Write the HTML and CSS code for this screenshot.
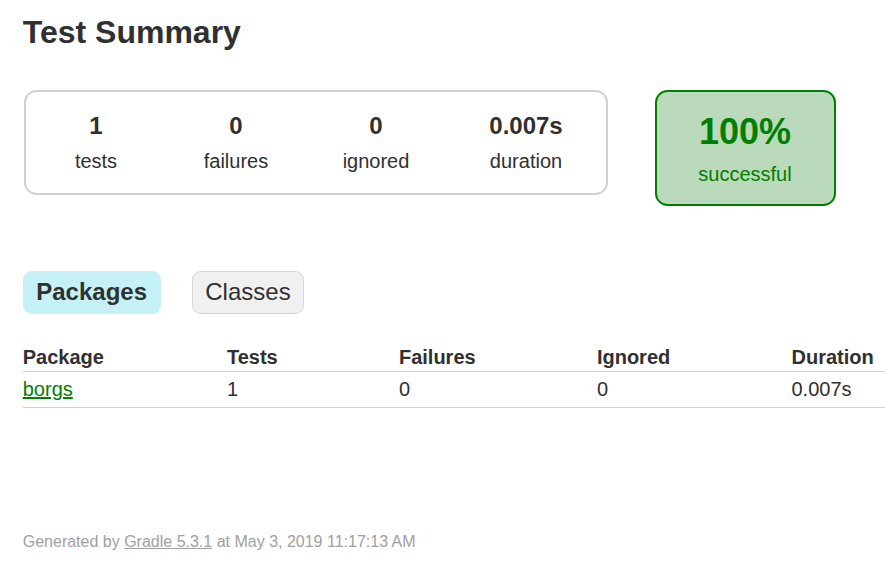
FILE: index.html
```html
<!DOCTYPE html>
<html>
<head>
<meta charset="utf-8">
<title>Test results - Test Summary</title>
<link rel="stylesheet" href="styles.css">
</head>
<body>
<div class="content">
  <h1 class="title">Test Summary</h1>
  <div class="summary">
    <div class="summary-group">
      <div class="info-box">
        <div class="counter">1</div>
        <p class="label">tests</p>
      </div>
      <div class="info-box">
        <div class="counter">0</div>
        <p class="label">failures</p>
      </div>
      <div class="info-box">
        <div class="counter">0</div>
        <p class="label">ignored</p>
      </div>
      <div class="info-box info-box-duration">
        <div class="counter">0.007s</div>
        <p class="label">duration</p>
      </div>
    </div>
    <div class="success-rate">
      <div class="percent">100%</div>
      <p class="label">successful</p>
    </div>
  </div>
  <ul class="tab-links">
    <li class="tab-link tab-selected"><a class="tab-anchor" href="#tab0">Packages</a></li>
    <li class="tab-link"><a class="tab-anchor" href="#tab1">Classes</a></li>
  </ul>
  <div class="tab">
    <table class="results">
      <thead>
        <tr>
          <th class="cell cell-first">Package</th>
          <th class="cell">Tests</th>
          <th class="cell">Failures</th>
          <th class="cell">Ignored</th>
          <th class="cell cell-last">Duration</th>
        </tr>
      </thead>
      <tbody>
        <tr>
          <td class="cell cell-first"><a class="pkg-link" href="#">borgs</a></td>
          <td class="cell">1</td>
          <td class="cell">0</td>
          <td class="cell">0</td>
          <td class="cell cell-last">0.007s</td>
        </tr>
      </tbody>
    </table>
  </div>
  <div class="footer">
    <p class="footer-text">Generated by <a class="footer-link" href="#">Gradle 5.3.1</a> at May 3, 2019 11:17:13 AM</p>
  </div>
</div>
</body>
</html>
```
FILE: styles.css
```css
html, body {
  margin: 0;
  padding: 0;
  overflow: hidden;
}

body {
  font-family: "Liberation Sans", Arial, sans-serif;
  font-size: 20px;
  color: #303030;
  background: #ffffff;
}

.content {
  padding: 14px 0 0 22.75px;
}

.title {
  font-size: 32px;
  font-weight: bold;
  margin: 0;
  white-space: nowrap;
}

.summary {
  display: flex;
  align-items: flex-start;
  margin-top: 37.5px;
  margin-bottom: 51px;
  padding: 1.25px;
}

.summary-group {
  display: flex;
  border: 2.5px solid #d0d0d0;
  border-radius: 12.5px;
}

.info-box {
  width: 137.5px;
  margin: 1.25px;
  padding: 18.75px 0;
  text-align: center;
}

.info-box-duration {
  width: 157.5px;
}

.counter {
  font-size: 24px;
  font-weight: bold;
  margin-bottom: 10px;
}

.label {
  margin: 0;
}

.success-rate {
  width: 177px;
  margin-left: 46.5px;
  padding: 18.75px 0;
  text-align: center;
  border: 2.5px solid #008000;
  border-radius: 12.5px;
  background-color: #bbd9bb;
  color: #008000;
}

.percent {
  font-size: 36px;
  font-weight: bold;
  margin-bottom: 10px;
}

.tab-links {
  display: flex;
  list-style: none;
  margin: 0 0 19px 0;
  padding: 12.5px 0;
}

.tab-link {
  padding: 6.25px 12.5px;
  margin-right: 31.25px;
  border: 1.25px solid #d4d4d4;
  border-radius: 8.75px;
  background-color: #f0f0f0;
}

.tab-selected {
  background-color: #c5f0f5;
  border-color: #c5f0f5;
}

.tab-anchor {
  display: block;
  font-size: 24px;
  color: #303030;
  text-decoration: none;
}

.tab-selected .tab-anchor {
  font-weight: bold;
}

.results {
  border-collapse: collapse;
  border-bottom: 1.25px solid #d0d0d0;
}

.results th {
  text-align: left;
  white-space: nowrap;
  font-weight: bold;
  padding: 1.25px 1.25px 1.25px 120px;
  border-bottom: 1.25px solid #d0d0d0;
}

.results td {
  white-space: nowrap;
  padding: 6.25px 1.25px 6.25px 120px;
}

.results .cell-first {
  padding-left: 0;
  padding-right: 3px;
}

.results .cell-last {
  padding-right: 14px;
}

.pkg-link {
  color: #008000;
  text-decoration: underline;
}

.footer {
  margin-top: 124.5px;
  font-size: 16px;
  color: #a0a0a0;
  white-space: nowrap;
}

.footer-text {
  margin: 0;
}

.footer-link {
  color: #a0a0a0;
  text-decoration: underline;
}
```
